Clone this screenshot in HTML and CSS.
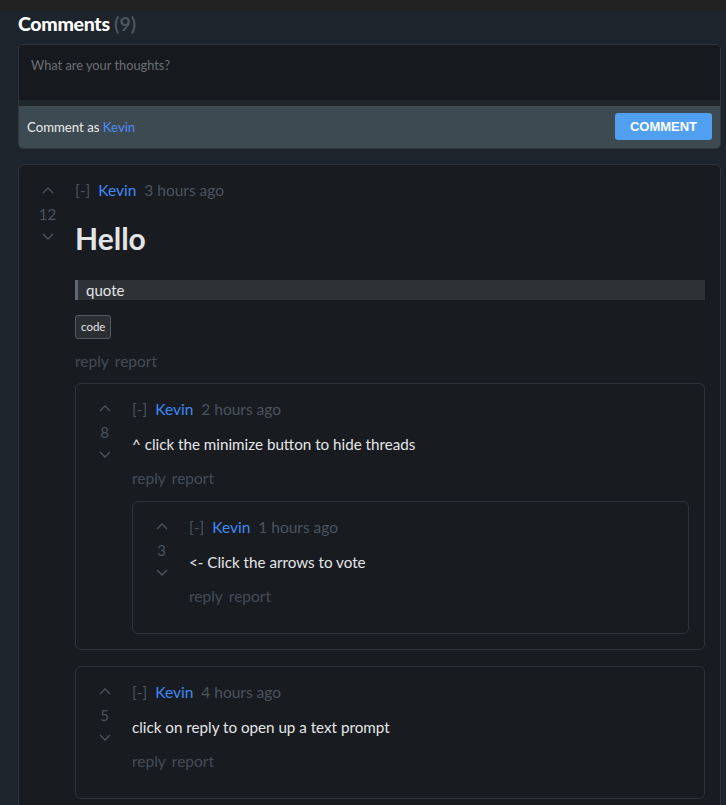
FILE: index.html
```html
<!DOCTYPE html>
<html>
<head>
<meta charset="utf-8">
<link rel="stylesheet" href="styles.css">
</head>
<body>
<div class="topbar"></div>
<main class="wrap">
  <h2 class="title">Comments <span class="count">(9)</span></h2>
  <div class="composer">
    <div class="textarea">What are your thoughts?</div>
    <div class="composer-foot">
      <span>Comment as <span class="user">Kevin</span></span>
      <button class="btn">COMMENT</button>
    </div>
  </div>

  <div class="comment top">
    <div class="votes">
      <svg class="chev" viewBox="0 0 12 7"><path d="M1 6 L6 1 L11 6"/></svg>
      <span class="score">12</span>
      <svg class="chev" viewBox="0 0 12 7"><path d="M1 1 L6 6 L11 1"/></svg>
    </div>
    <div class="body">
      <div class="meta"><span class="toggle">[-]</span><span class="user">Kevin</span><span class="time">3 hours ago</span></div>
      <h1 class="hello">Hello</h1>
      <blockquote class="quote">quote</blockquote>
      <code class="code">code</code>
      <div class="actions"><span>reply</span><span>report</span></div>

      <div class="comment">
        <div class="votes">
          <svg class="chev" viewBox="0 0 12 7"><path d="M1 6 L6 1 L11 6"/></svg>
          <span class="score">8</span>
          <svg class="chev" viewBox="0 0 12 7"><path d="M1 1 L6 6 L11 1"/></svg>
        </div>
        <div class="body">
          <div class="meta"><span class="toggle">[-]</span><span class="user">Kevin</span><span class="time">2 hours ago</span></div>
          <p class="text">^ click the minimize button to hide threads</p>
          <div class="actions"><span>reply</span><span>report</span></div>

          <div class="comment">
            <div class="votes">
              <svg class="chev" viewBox="0 0 12 7"><path d="M1 6 L6 1 L11 6"/></svg>
              <span class="score">3</span>
              <svg class="chev" viewBox="0 0 12 7"><path d="M1 1 L6 6 L11 1"/></svg>
            </div>
            <div class="body">
              <div class="meta"><span class="toggle">[-]</span><span class="user">Kevin</span><span class="time">1 hours ago</span></div>
              <p class="text">&lt;- Click the arrows to vote</p>
              <div class="actions"><span>reply</span><span>report</span></div>
            </div>
          </div>
        </div>
      </div>

      <div class="comment">
        <div class="votes">
          <svg class="chev" viewBox="0 0 12 7"><path d="M1 6 L6 1 L11 6"/></svg>
          <span class="score">5</span>
          <svg class="chev" viewBox="0 0 12 7"><path d="M1 1 L6 6 L11 1"/></svg>
        </div>
        <div class="body">
          <div class="meta"><span class="toggle">[-]</span><span class="user">Kevin</span><span class="time">4 hours ago</span></div>
          <p class="text">click on reply to open up a text prompt</p>
          <div class="actions"><span>reply</span><span>report</span></div>
        </div>
      </div>
    </div>
  </div>
</main>
</body>
</html>
```
FILE: styles.css
```css
html, body {
  margin: 0;
  padding: 0;
  background: #1e242b;
  font-family: Lato, "Open Sans", sans-serif;
  color: #e4e6e8;
  height: 100%;
  overflow: hidden;
}
.topbar {
  height: 11px;
  background: #222222;
}
.wrap {
  padding-left: 18px;
  width: 703px;
}
.title {
  margin: 0;
  padding-top: 1px;
  height: 32px;
  font-size: 19.5px;
  font-weight: 900;
  color: #ffffff;
  letter-spacing: -0.3px;
  line-height: 24px;
}
.count {
  color: #4a5560;
  font-weight: 700;
  letter-spacing: 0;
}
.composer {
  border: 1px solid #2d363e;
  border-radius: 5px;
  overflow: hidden;
  background: #1f262c;
}
.textarea {
  height: 55px;
  background: #161a1e;
  box-sizing: border-box;
  padding: 12px 12px;
  font-size: 12.8px;
  color: #6c7074;
}
.composer-foot {
  margin-top: 6px;
  height: 42px;
  background: #3e4a52;
  display: flex;
  align-items: center;
  justify-content: space-between;
  padding: 0 8px 0 8px;
  font-size: 13.2px;
  color: #e8eaec;
}
.user {
  color: #4a8cf6;
}
.btn {
  width: 97px;
  height: 27px;
  border: none;
  border-radius: 3px;
  background: #509ff0;
  color: #ffffff;
  font-family: "Liberation Sans", Arial, sans-serif;
  font-weight: 700;
  font-size: 13px;
  margin-top: -1px;
}
.comment {
  display: flex;
  border: 1px solid #2c333a;
  border-radius: 6px;
  background: #181c21;
  padding: 15px 15px 17px 10px;
}
.comment.top {
  margin-top: 15px;
  padding-top: 16px;
  padding-bottom: 20px;
}
.votes {
  width: 37px;
  flex: none;
  display: flex;
  flex-direction: column;
  align-items: center;
  padding-top: 6px;
  margin-right: 9px;
}
.chev {
  width: 12px;
  height: 7px;
  fill: none;
  stroke: #4a535d;
  stroke-width: 1.4;
}
.score {
  font-size: 15px;
  color: #4a535d;
  line-height: 20px;
  margin: 10px 0 9px;
}
.body {
  flex: 1;
  min-width: 0;
}
.meta {
  height: 20px;
  line-height: 20px;
  font-size: 15.5px;
  display: flex;
  gap: 8px;
  color: #4a535d;
}
.top > .body > .meta {
  margin-top: -1px;
}
.meta .user {
  color: #3f89f7;
}
.hello {
  margin: 16px 0 0;
  font-size: 30px;
  font-weight: 700;
  line-height: 44px;
  height: 44px;
  color: #e3e4e6;
}
.quote {
  margin: 20px 0 0;
  background: #2e3236;
  border-left: 3px solid #5d6875;
  padding: 0 8px;
  height: 20px;
  line-height: 20px;
  font-size: 15px;
  color: #e3e4e6;
}
.code {
  display: inline-block;
  margin-top: 15px;
  font-family: Lato, "Open Sans", sans-serif;
  font-size: 11.5px;
  background: #2b2f33;
  border: 1px solid #555a60;
  border-radius: 3px;
  padding: 0 5px;
  height: 22px;
  line-height: 22px;
  color: #e3e4e6;
}
.top > .body > .actions {
  margin-top: 12px;
}
.text {
  margin: 15px 0 0;
  font-size: 15.2px;
  line-height: 20px;
  height: 20px;
  color: #e4e6e8;
}
.actions {
  margin-top: 14px;
  height: 20px;
  line-height: 20px;
  font-size: 15.5px;
  color: #434c56;
  display: flex;
  gap: 6px;
}
.actions:last-child {
  margin-bottom: 10px;
}
.actions + .comment {
  margin-top: 12px;
}
.comment .comment .actions + .comment {
  margin-top: 13px;
}
.comment .comment .body > .comment:last-child {
  margin-bottom: -2px;
}
.comment + .comment {
  margin-top: 16px;
}
```
